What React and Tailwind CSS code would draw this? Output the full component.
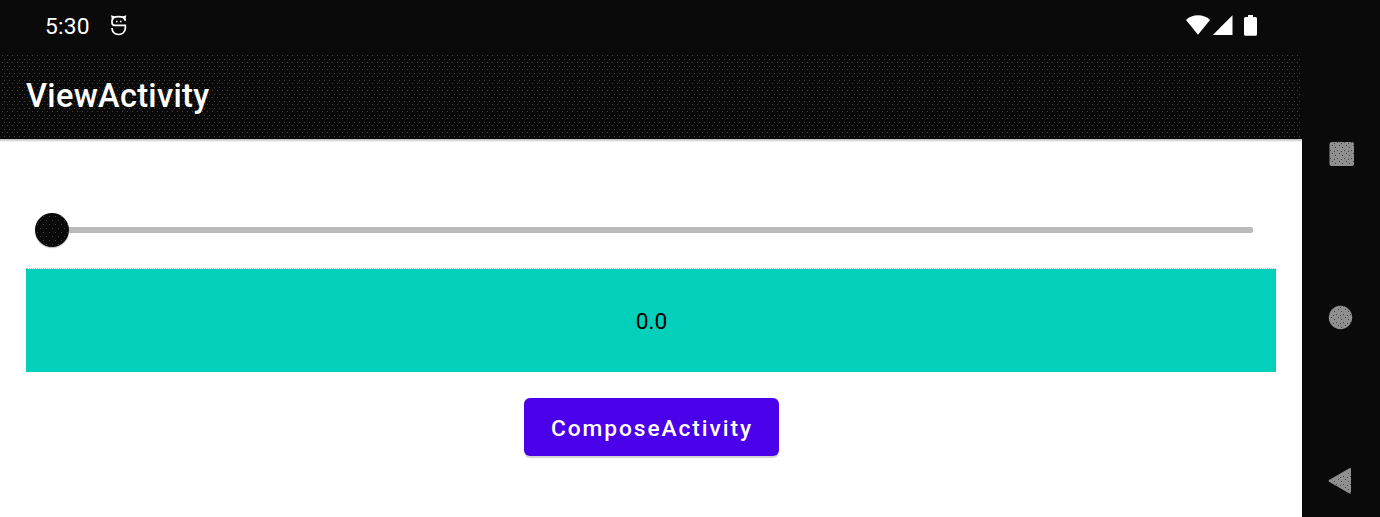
function StatusBar() {
  return (
    <div className="flex h-[54px] shrink-0 items-start justify-between bg-[#0a0a0a] pl-[45px] pr-[44px] text-white">
      <div className="flex items-start">
        <span className="w-[65px] pt-[12px] text-[22.75px] leading-[30px] tracking-[0.2px]">5:30</span>
        <svg className="mt-[15px]" width="17" height="21" viewBox="0 0 17 21" fill="none" stroke="white" strokeWidth="1.7">
          <path d="M15.5 10.4H4.8C2.600 10.4 2 9.4 2 7.5V5.8C2.300 3 4.900 1.700 8.600 1.700S15 3 15.300 5.800M2 13C2.200 17.300 4.900 19.500 8.600 19.500S15.200 17 15.300 13V10.4H4" />
          <path d="M2.700 4.600L2 1.300L4.900 2.300M14.600 4.600L15.300 1.300L12.400 2.300" strokeWidth="1.5" />
          <path d="M6 6.500h1.500M10 6.500h1.500" strokeWidth="1.500" />
        </svg>
      </div>
      <div className="flex pt-[15px]">
        <svg width="72" height="21" viewBox="0 0 72 21" fill="white">
          <path d="M0 5C6-1.200 18-1.200 24 5L12 19.700Z" />
          <path d="M46.500 0.300V20H26.800Z" />
          <path d="M62 0h5v2h2.500q1.500 0 1.500 1.500v15.700q0 1.500-1.500 1.500h-10q-1.500 0-1.500-1.500V3.500q0-1.500 1.500-1.500h2.500z" />
        </svg>
      </div>
    </div>
  );
}

function NavigationRail() {
  return (
    <nav className="flex w-[78px] shrink-0 flex-col items-center bg-[#0a0a0a] pt-[141px]">
      <svg className="ml-px" width="26" height="26" viewBox="0 0 26 26">
        <NavDots />
        <rect x="0.500" y="1" width="24.500" height="24" rx="2" fill="#8f8f8f" />
        <rect x="0.500" y="1" width="24.500" height="24" rx="2" fill="url(#navDots)" />
      </svg>
      <svg className="mt-[138px]" width="26" height="26" viewBox="0 0 26 26">
        <circle cx="12.500" cy="12.500" r="11.700" fill="#8f8f8f" />
        <circle cx="12.500" cy="12.500" r="11.700" fill="url(#navDots)" />
      </svg>
      <svg className="mt-[136px]" width="26" height="30" viewBox="0 0 26 30">
        <path d="M1 13.100L21.500 1.300Q23 0.500 23 2V25.800Q23 27.300 21.500 26.500L1 14.700Q0 13.900 1 13.100Z" fill="#8f8f8f" />
        <path d="M1 14L23 2V26.500Z" fill="url(#navDots)" />
      </svg>
    </nav>
  );
}

function NavDots() {
  return (
    <defs>
      <pattern id="navDots" width="7" height="8" patternUnits="userSpaceOnUse">
        <path d="M1 1h1v1h-1zM5 2h1v1h-1zM3 4h1v1h-1zM6 6h1v1h-1z" fill="#424242" />
      </pattern>
    </defs>
  );
}

export default function App() {
  return (
    <div className="flex h-[517px] w-[1380px] overflow-hidden bg-white font-['Roboto',sans-serif]">
      <div className="flex w-[1302px] shrink-0 flex-col">
        <StatusBar />
        <header className="flex h-[85px] shrink-0 items-center bg-[#0a0a0a] bg-[conic-gradient(at_1px_1px,transparent_270deg,#424242_0),conic-gradient(at_1px_1px,transparent_270deg,#424242_0)] bg-[length:5px_7px,5px_7px] bg-[position:2px_1px,4px_5px] pb-[2px] pl-[26px]">
          <h1 className="text-[32.5px] font-medium leading-[38px] tracking-[0.32px] text-white">ViewActivity</h1>
        </header>
        <div className="h-[4px] shrink-0 bg-gradient-to-b from-[#bababa] to-white to-80%" />
        <main className="flex flex-col items-center px-[26px] pt-[70px]">
          <div className="flex w-full items-center pl-[9px] pr-[23px]">
            <div className="size-[34px] shrink-0 rounded-full bg-[#0a0a0a] bg-[conic-gradient(at_1px_1px,transparent_270deg,#424242_0),conic-gradient(at_1px_1px,transparent_270deg,#424242_0)] bg-[length:6px_8px,6px_8px] bg-[position:2px_3px,5px_7px] shadow-[0_1px_1px_rgba(0,0,0,0.3)]" />
            <div className="h-[6px] grow rounded-r-[2px] bg-[#bababa]" />
          </div>
          <div className="mt-[21px] w-full border-t border-dotted border-[#bababa]" />
          <div className="flex h-[103px] w-full items-center justify-center bg-[#03d0ba] pl-px pt-[3px] text-[22.75px] text-black">0.0</div>
          <button className="mt-[26px] flex h-[58px] w-[255px] items-center justify-center rounded-[6px] bg-[#4a00e8] pl-[2px] pt-[4px] text-[22.75px] font-medium tracking-[1.92px] text-white shadow-[0_2px_1px_rgba(0,0,0,0.18)]">
            ComposeActivity
          </button>
        </main>
      </div>
      <NavigationRail />
    </div>
  );
}
